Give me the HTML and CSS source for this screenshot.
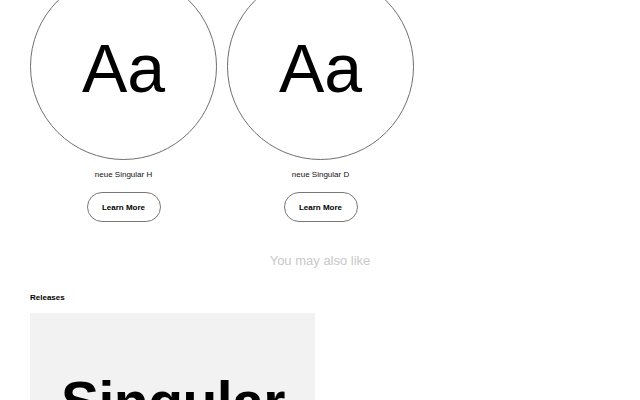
FILE: index.html
```html
<!DOCTYPE html>
<html>
<head>
<meta charset="utf-8">
<link rel="stylesheet" href="styles.css">
</head>
<body>
<div class="page">
  <div class="fonts">
    <div class="font-item">
      <div class="circle"><span class="aa">Aa</span></div>
      <div class="label">neue Singular H</div>
      <a class="btn">Learn More</a>
    </div>
    <div class="font-item">
      <div class="circle"><span class="aa">Aa</span></div>
      <div class="label">neue Singular D</div>
      <a class="btn">Learn More</a>
    </div>
  </div>
  <h2 class="also">You may also like</h2>
  <h3 class="section">Releases</h3>
  <div class="release">
    <span class="big">Singular</span>
  </div>
</div>
</body>
</html>
```

FILE: styles.css
```css
html, body {
  margin: 0;
  padding: 0;
  background: #fff;
  font-family: "Liberation Sans", Arial, sans-serif;
  color: #000;
  overflow: hidden;
}
.page {
  padding: 0 30px;
}
.fonts {
  display: flex;
  gap: 10px;
  margin-top: -27px;
}
.font-item {
  width: 187px;
  display: flex;
  flex-direction: column;
  align-items: center;
}
.circle {
  width: 185px;
  height: 185px;
  border: 1px solid #6f6f6f;
  border-radius: 50%;
  display: flex;
  align-items: center;
  justify-content: center;
}
.aa {
  font-size: 68px;
  line-height: 1;
  margin-top: 2px;
}
.label {
  font-size: 8px;
  line-height: 10px;
  margin-top: 10px;
  color: #111;
}
.btn {
  margin-top: 12px;
  width: 72px;
  height: 28px;
  border: 1px solid #777;
  border-radius: 15px;
  display: flex;
  align-items: center;
  justify-content: center;
  font-size: 8px;
  font-weight: bold;
}
.also {
  margin: 31px 0 0;
  text-align: center;
  font-size: 13px;
  line-height: 16px;
  font-weight: normal;
  color: #c8c8c8;
}
.section {
  margin: 24px 0 0;
  font-size: 8px;
  line-height: 10px;
  font-weight: bold;
}
.release {
  margin-top: 10px;
  width: 285px;
  height: 200px;
  background: #f2f2f2;
  padding: 61px 0 0 31px;
  box-sizing: border-box;
}
.big {
  font-size: 57px;
  font-weight: 700;
  line-height: 1;
  letter-spacing: -0.5px;
}
```
